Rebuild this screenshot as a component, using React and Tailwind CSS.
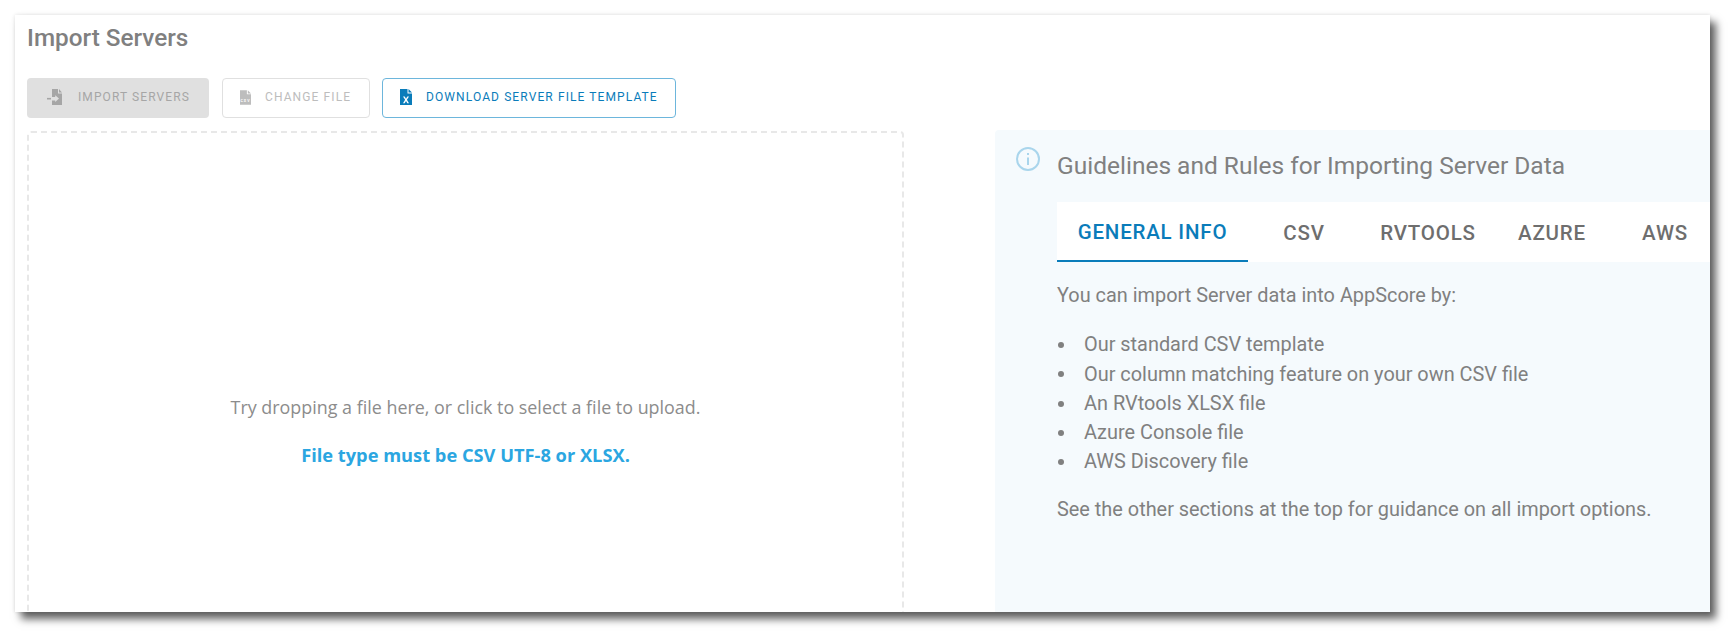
import { useState } from 'react';

const tabs = [
  { label: 'General Info', width: 'w-[191px]' },
  { label: 'CSV', width: 'w-[112px]' },
  { label: 'RVtools', width: 'w-[136px]' },
  { label: 'Azure', width: 'w-[112px]' },
  { label: 'AWS', width: 'w-[114px]' },
];

const importOptions = [
  'Our standard CSV template',
  'Our column matching feature on your own CSV file',
  'An RVtools XLSX file',
  'Azure Console file',
  'AWS Discovery file',
];

function FileIcon({ className, label }) {
  return (
    <svg viewBox="0 0 12 16" className={className} fill="currentColor">
      <path d="M0 0h7.5v4.5H12V16H0z" />
      <path d="M8.5 0 12 3.5H8.5z" />
      {label === 'x' && <path d="M3 7.5h1.7L6 9.8l1.3-2.3H9l-2.1 3.3L9 14.2H7.3L6 11.9l-1.3 2.3H3l2.1-3.4z" fill="#fff" />}
      {label === 'csv' && <text x="6" y="13" textAnchor="middle" fontSize="4" fontWeight="700" fill="#fff">CSV</text>}
    </svg>
  );
}

function ImportIcon({ className }) {
  return (
    <svg viewBox="0 0 16 16" className={className} fill="currentColor">
      <path d="M5 0h6v4.5h4V16H5v-4.5h3.2V13L12 9.6 8.2 6.2v1.7H5z" />
      <path d="M12 0l3 3.5h-3z" />
      <path d="M0 8.9h4v1.6H0z" />
    </svg>
  );
}

export default function App() {
  const [activeTab, setActiveTab] = useState('General Info');

  return (
    <div className="w-[1735px] h-[637px] bg-white pt-[15px] pl-[15px] overflow-hidden">
      <div className="w-[1695px] h-[597px] bg-white overflow-hidden flex flex-col pl-[12px] shadow-[0_0_4px_rgba(0,0,0,0.12),6px_7px_8px_rgba(0,0,0,0.62)] font-['Roboto',sans-serif]">
        <h1 className="h-[63px] pt-[8px] text-[24.3px] leading-[30px] font-medium text-[#808080]">Import Servers</h1>

        {/* Toolbar */}
        <div className="flex h-[40px] text-[12px]">
          <button className="w-[182px] pb-[2px] rounded-[4px] bg-[#e0e0e0] text-[#a6a6a6] flex items-center gap-[15px] pl-[20px] uppercase tracking-[1.1px]">
            <ImportIcon className="w-[16px] h-[16px] text-[#a6a6a6]" />
            Import Servers
          </button>
          <button className="ml-[13px] w-[148px] pb-[2px] rounded-[4px] border border-[#e0e0e0] text-[#bdbdbd] flex items-center gap-[14px] pl-[17px] uppercase tracking-[1.1px]">
            <FileIcon className="w-[11px] h-[15px]" label="csv" />
            Change File
          </button>
          <button className="ml-[12px] w-[294px] pb-[2px] rounded-[4px] border border-[#6db6dc] text-[#0a7cba] flex items-center gap-[14px] pl-[17px] uppercase tracking-[1.1px]">
            <FileIcon className="w-[12px] h-[16px]" label="x" />
            Download Server File Template
          </button>
        </div>

        <div className="flex mt-[13px] flex-1 min-h-0">
          {/* Dropzone */}
          <div className="w-[877px] h-[700px] shrink-0 border-2 border-dashed border-[#e8e8e8] rounded-[4px] flex flex-col items-center pt-[261px] font-['Open_Sans',sans-serif]">
            <p className="text-[17.9px] leading-[26px] text-[#8c8c8c]">Try dropping a file here, or click to select a file to upload.</p>
            <p className="mt-[22px] text-[18.25px] leading-[26px] font-bold text-[#2ba6e1]">File type must be CSV UTF-8 or XLSX.</p>
          </div>

          {/* Guidelines */}
          <div className="ml-[91px] -mt-[1px] flex-1 min-w-0 bg-[#f5fafd] rounded-tl-[4px] flex">
            <svg viewBox="0 0 24 24" className="w-[24px] h-[24px] ml-[21px] mt-[17px] shrink-0 text-[#a9d5ec]" fill="none" stroke="currentColor" strokeWidth="2">
              <circle cx="12" cy="12" r="11" />
              <path d="M12 10.5V18M12 6v2" />
            </svg>
            <div className="ml-[17px] flex-1 min-w-0">
              <h2 className="pt-[20px] h-[72px] text-[24.5px] leading-[32px] text-[#808080]">Guidelines and Rules for Importing Server Data</h2>
              <div className="flex h-[60px] bg-white text-[20.5px] font-medium">
                {tabs.map((tab) => (
                  <button
                    key={tab.label}
                    onClick={() => setActiveTab(tab.label)}
                    className={activeTab === tab.label ? `${tab.width} shrink-0 pt-[2px] uppercase tracking-[0.8px] border-b-2 border-[#0a7cba] text-[#0a7cba] text-center` : `${tab.width} shrink-0 pt-[2px] uppercase tracking-[0.8px] text-[#6e6e6e] text-center`}
                  >
                    {tab.label}
                  </button>
                ))}
              </div>
              <div className="text-[19.9px] leading-[29.3px] text-[#808080]">
                <p className="mt-[19px]">You can import Server data into AppScore by:</p>
                <ul className="mt-[20px]">
                  {importOptions.map((option) => (
                    <li key={option} className="flex items-center">
                      <span className="w-[6px] h-[6px] rounded-full bg-[#808080] ml-[1px] mr-[20px] shrink-0" />
                      {option}
                    </li>
                  ))}
                </ul>
                <p className="mt-[18px]">See the other sections at the top for guidance on all import options.</p>
              </div>
            </div>
          </div>
        </div>
      </div>
    </div>
  );
}
